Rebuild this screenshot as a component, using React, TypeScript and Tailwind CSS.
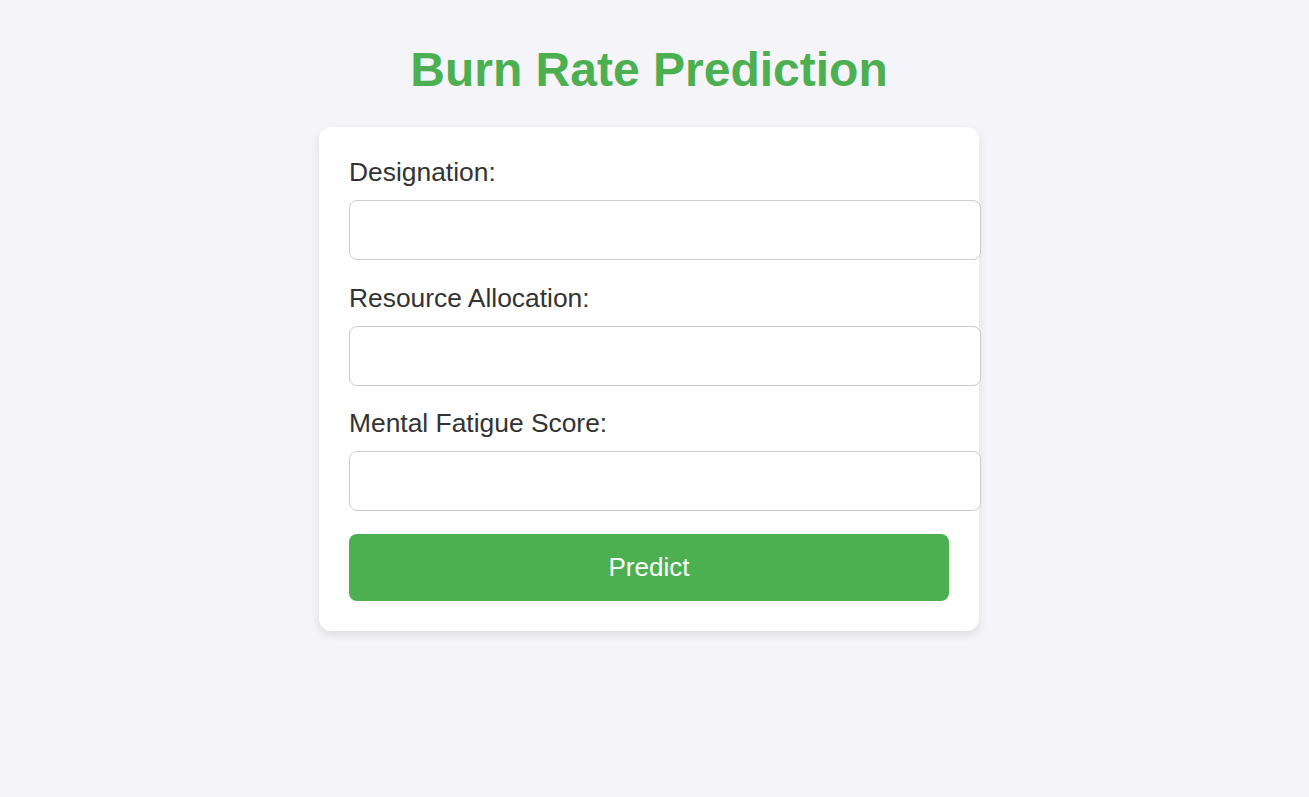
import React from "react";

const fields = ["Designation:", "Resource Allocation:", "Mental Fatigue Score:"];

export default function App() {
  return (
    <main className="min-h-[797px] bg-[#f4f4f9] font-['Liberation_Sans',Arial,sans-serif] text-[#333] flex flex-col items-center pt-[42px] pr-[11px]">
      <h1 className="text-[48px] leading-[55px] font-bold text-[#4caf50]">Burn Rate Prediction</h1>
      <form
        className="mt-[30px] w-[660px] bg-white rounded-xl p-[30px] shadow-[0_4px_10px_rgba(0,0,0,0.1)]"
        onSubmit={(e) => e.preventDefault()}
      >
        {fields.map((label) => (
          <div key={label} className="mb-[22.6px]">
            <label className="block text-[26.4px] leading-[30px] mb-[13px]">{label}</label>
            <input
              type="text"
              className="block w-[632px] h-[60px] px-[15px] border border-[#ccc] rounded-lg bg-white text-[24px] outline-none"
            />
          </div>
        ))}
        <button
          type="submit"
          className="block w-full h-[67px] rounded-lg bg-[#4caf50] text-white text-[26px]"
        >
          Predict
        </button>
      </form>
    </main>
  );
}
